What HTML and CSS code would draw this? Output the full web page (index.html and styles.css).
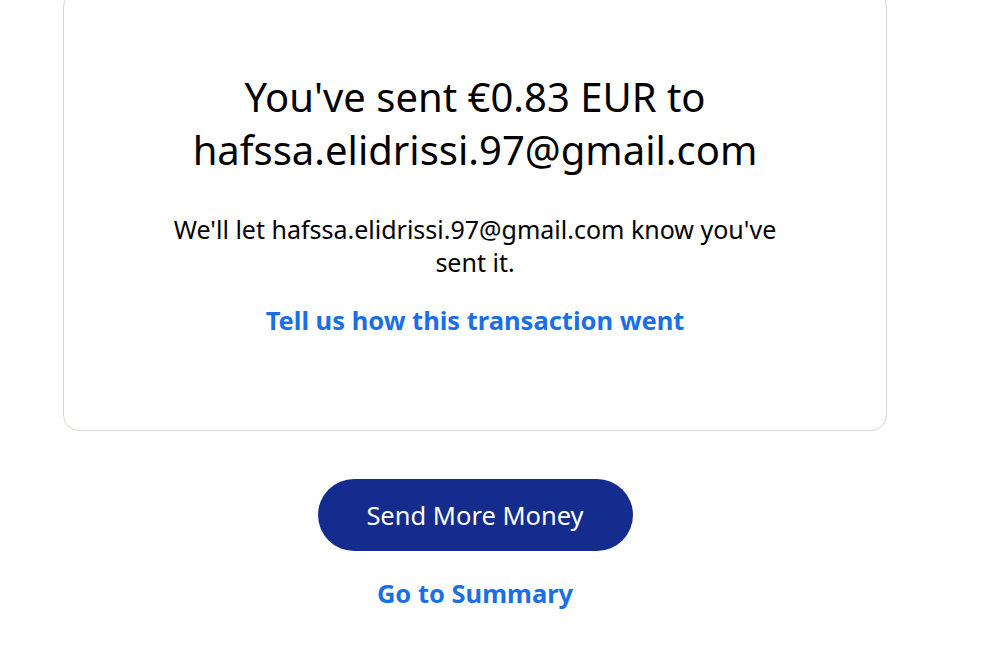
FILE: index.html
```html
<!DOCTYPE html>
<html lang="en">
<head>
<meta charset="utf-8">
<title>Sent</title>
<link rel="stylesheet" href="styles.css">
</head>
<body>
<main class="page">
  <section class="card">
    <h1 class="title">You've sent €0.83 EUR to hafssa.elidrissi.97@gmail.com</h1>
    <p class="note">We'll let hafssa.elidrissi.97@gmail.com know you've sent it.</p>
    <a class="link" href="#">Tell us how this transaction went</a>
  </section>
  <div class="actions">
    <a class="btn" href="#">Send More Money</a>
    <a class="link summary" href="#">Go to Summary</a>
  </div>
</main>
</body>
</html>
```
FILE: styles.css
```css
html, body {
  margin: 0;
  padding: 0;
  background: #ffffff;
}
body {
  font-family: "Noto Sans", "Open Sans", sans-serif;
  color: #000000;
}
.page {
  width: 824px;
  margin-left: 63px;
  margin-top: -9px;
}
.card {
  box-sizing: border-box;
  border: 1px solid #d9d6ce;
  border-radius: 16px;
  padding: 78px 100px 94px;
  display: flex;
  flex-direction: column;
  align-items: center;
  text-align: center;
}
.title {
  margin: 0;
  font-size: 40px;
  font-weight: 400;
  line-height: 53px;
  max-width: 620px;
}
.note {
  margin: 37px 0 0;
  font-size: 25px;
  line-height: 33px;
  max-width: 640px;
}
.link {
  color: #1b6fe6;
  font-weight: 700;
  font-size: 25.5px;
  text-decoration: none;
  line-height: 32px;
}
.card .link {
  margin-top: 25px;
}
.actions {
  display: flex;
  flex-direction: column;
  align-items: center;
  padding-top: 48px;
}
.btn {
  display: flex;
  align-items: center;
  justify-content: center;
  width: 315px;
  height: 72px;
  border-radius: 36px;
  background: #142c8e;
  color: #ffffff;
  font-size: 25.5px;
  text-decoration: none;
}
.summary {
  margin-top: 26px;
}
```
